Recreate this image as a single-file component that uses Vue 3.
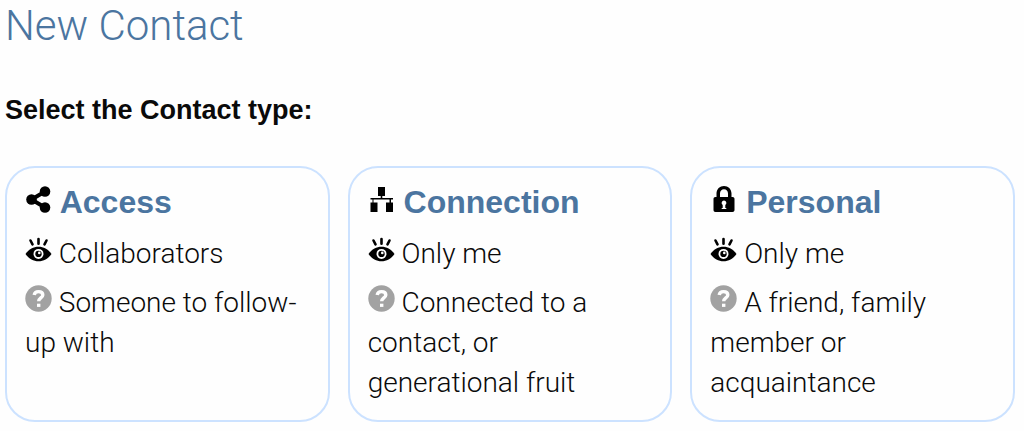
<script setup>
const types = [
  { name: 'Access', icon: 'share', visibility: 'Collaborators', description: 'Someone to follow-up with' },
  { name: 'Connection', icon: 'network', visibility: 'Only me', description: 'Connected to a contact, or generational fruit' },
  { name: 'Personal', icon: 'lock', visibility: 'Only me', description: 'A friend, family member or acquaintance' },
]
</script>

<template>
  <main class="page">
    <h1 class="title">New Contact</h1>
    <h2 id="type-label" class="prompt">Select the Contact type:</h2>
    <div class="types" role="group" aria-labelledby="type-label">
      <button v-for="type in types" :key="type.name" type="button" class="card">
        <span class="name">
          <svg v-if="type.icon === 'share'" class="icon" viewBox="0 0 27 27" aria-hidden="true">
            <path d="M20 5.5 6.5 13.5 20 21.5" fill="none" stroke="#000" stroke-width="4" />
            <circle cx="6.5" cy="13.5" r="5.3" />
            <circle cx="20" cy="5.5" r="5.3" />
            <circle cx="20" cy="21.5" r="5.3" />
          </svg>
          <svg v-else-if="type.icon === 'network'" class="icon" viewBox="0 0 27 27" aria-hidden="true">
            <path d="M10 1h7v9h-2.700v2H25v1.500h-2v3h2V26h-7v-9.500h3.500v-3h-16v3H9.500V26h-7v-9.500h2v-3H2.500V12h10.200v-2H10z" />
          </svg>
          <svg v-else class="icon" viewBox="0 0 27 27" aria-hidden="true">
            <path fill-rule="evenodd" d="M6.500 11V7.500C6.500 3 9.800 0 14 0s7.500 3 7.500 7.500V11h1c1.300 0 2 .8 2 2v11c0 1.300-.8 2-2 2h-17c-1.300 0-2-.7-2-2V13c0-1.200.7-2 2-2zM10 11h8V7.500C18 5 16.300 3.300 14 3.300S10 5 10 7.500zM14 14.500a2.400 2.400 0 0 0-1.300 4.400V22h-1v1h4.600v-1h-1v-3.100A2.400 2.400 0 0 0 14 14.500z" />
          </svg>
          {{ type.name }}
        </span>
        <span class="line">
          <svg class="icon" viewBox="0 0 27 27" aria-hidden="true">
            <path d="M5.500 4.500 7.500 8.300M13.500 3V7.700M21.500 4.500 19.500 8.300" fill="none" stroke="#000" stroke-width="2.600" stroke-linecap="round" />
            <path d="M0.500 18C4 13 8.500 10.700 13.500 10.700s9.500 2.300 13 7.300c-3.500 5-8 7.300-13 7.300s-9.500-2.300-13-7.300z" />
            <circle cx="13.500" cy="17.900" r="4.100" fill="none" stroke="#fefefe" stroke-width="1.800" />
            <circle cx="14.300" cy="16.900" r="1.300" fill="#fefefe" />
          </svg>
          {{ type.visibility }}
        </span>
        <span class="line">
          <svg class="icon" viewBox="0 0 27 27" aria-hidden="true">
            <circle cx="13.500" cy="13.500" r="13.200" fill="#a2a2a2" />
            <path d="M9.200 10c.3-2.300 1.900-3.400 4.300-3.400 2.600 0 4.300 1.300 4.300 3.300 0 3-4.100 3.100-4.100 6.400" fill="none" stroke="#fefefe" stroke-width="3.400" />
            <path d="M12 18.700h3.400v3.200H12z" fill="#fefefe" />
          </svg>
          {{ type.description }}
        </span>
      </button>
    </div>
  </main>
</template>

<style>
body {
  background: #fefefe;
}
</style>

<style scoped>
.page {
  padding: 0 9px 9px 5px;
  color: #0a0a0a;
  font-family: Roboto, "Liberation Sans", sans-serif;
  font-weight: 300;
}

.title {
  margin: 0;
  color: #4b75a0;
  font-size: 42px;
  font-weight: 300;
  line-height: 52px;
}

.prompt {
  margin: 38px 0 36px;
  font-family: "Liberation Sans", sans-serif;
  font-size: 27px;
  font-weight: 700;
  line-height: 40px;
}

.types {
  display: grid;
  grid-template-columns: repeat(3, 1fr);
  gap: 18px;
}

.card {
  display: flex;
  flex-direction: column;
  padding: 14px 18px 17px;
  border: 2px solid #cce2ff;
  border-radius: 30px;
  background: transparent;
  color: inherit;
  font: inherit;
  font-size: 28px;
  line-height: 40px;
  text-align: left;
  cursor: pointer;
}

.name {
  margin-bottom: 3px;
  color: #4b75a0;
  font-family: "Liberation Sans", sans-serif;
  font-size: 32px;
  font-weight: 700;
}

.line {
  margin-top: 9px;
}

.icon {
  width: 27px;
  height: 27px;
  vertical-align: 0;
}
</style>
